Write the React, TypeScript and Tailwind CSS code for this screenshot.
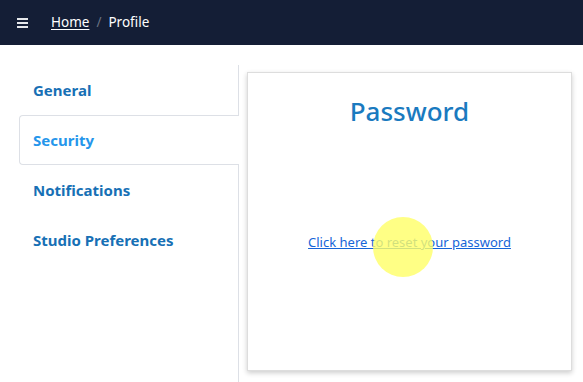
import React from "react";

const tabs = ["General", "Security", "Notifications", "Studio Preferences"];

export default function App() {
  const active = "Security";
  return (
    <div className="min-h-[382px] bg-white" style={{ fontFamily: '"Noto Sans", "Open Sans", sans-serif' }}>
      <header className="h-[45px] bg-[#141e36] flex items-center pl-[17px] text-white text-[13.5px]">
        <svg width="11" height="12" viewBox="0 0 11 12" className="mr-[23px]">
          <rect x="0" y="1" width="11" height="2" fill="#e5e7eb" />
          <rect x="0" y="5" width="11" height="2" fill="#e5e7eb" />
          <rect x="0" y="9" width="11" height="2" fill="#e5e7eb" />
        </svg>
        <a href="#" className="underline underline-offset-2">Home</a>
        <span className="mx-[7px] text-gray-500">/</span>
        <span>Profile</span>
      </header>
      <div className="flex pl-[19px] pt-[20px]">
        <nav className="w-[220px] flex flex-col">
          {tabs.map((t) => (
            <div
              key={t}
              className={
                t === active
                  ? "h-[50px] flex items-center pl-[13px] border border-r-0 border-[#dde0e6] rounded-l-[4px] text-[15px] font-bold text-[#2596eb]"
                  : "h-[50px] flex items-center pl-[14px] border-r border-[#dde0e6] text-[15px] font-bold text-[#1770b5]"
              }
            >
              {t}
            </div>
          ))}
          <div className="border-r border-[#dde0e6] h-[118px]" />
        </nav>
        <div className="pl-[8px] pt-[7px]">
          <div className="relative w-[325px] h-[299px] border border-[#dddddd] bg-white shadow-[0_2px_5px_rgba(0,0,0,0.2)] flex flex-col items-center">
            <h1 className="mt-[19px] text-[26px] text-[#1a7abf] font-medium">Password</h1>
            <a href="#" className="mt-[102px] text-[13px] text-[#1565d8] underline">
              Click here to reset your password
            </a>
            <div className="absolute left-[125px] top-[144px] w-[60px] h-[60px] rounded-full bg-[#ffff66]/80" />
          </div>
        </div>
      </div>
    </div>
  );
}
